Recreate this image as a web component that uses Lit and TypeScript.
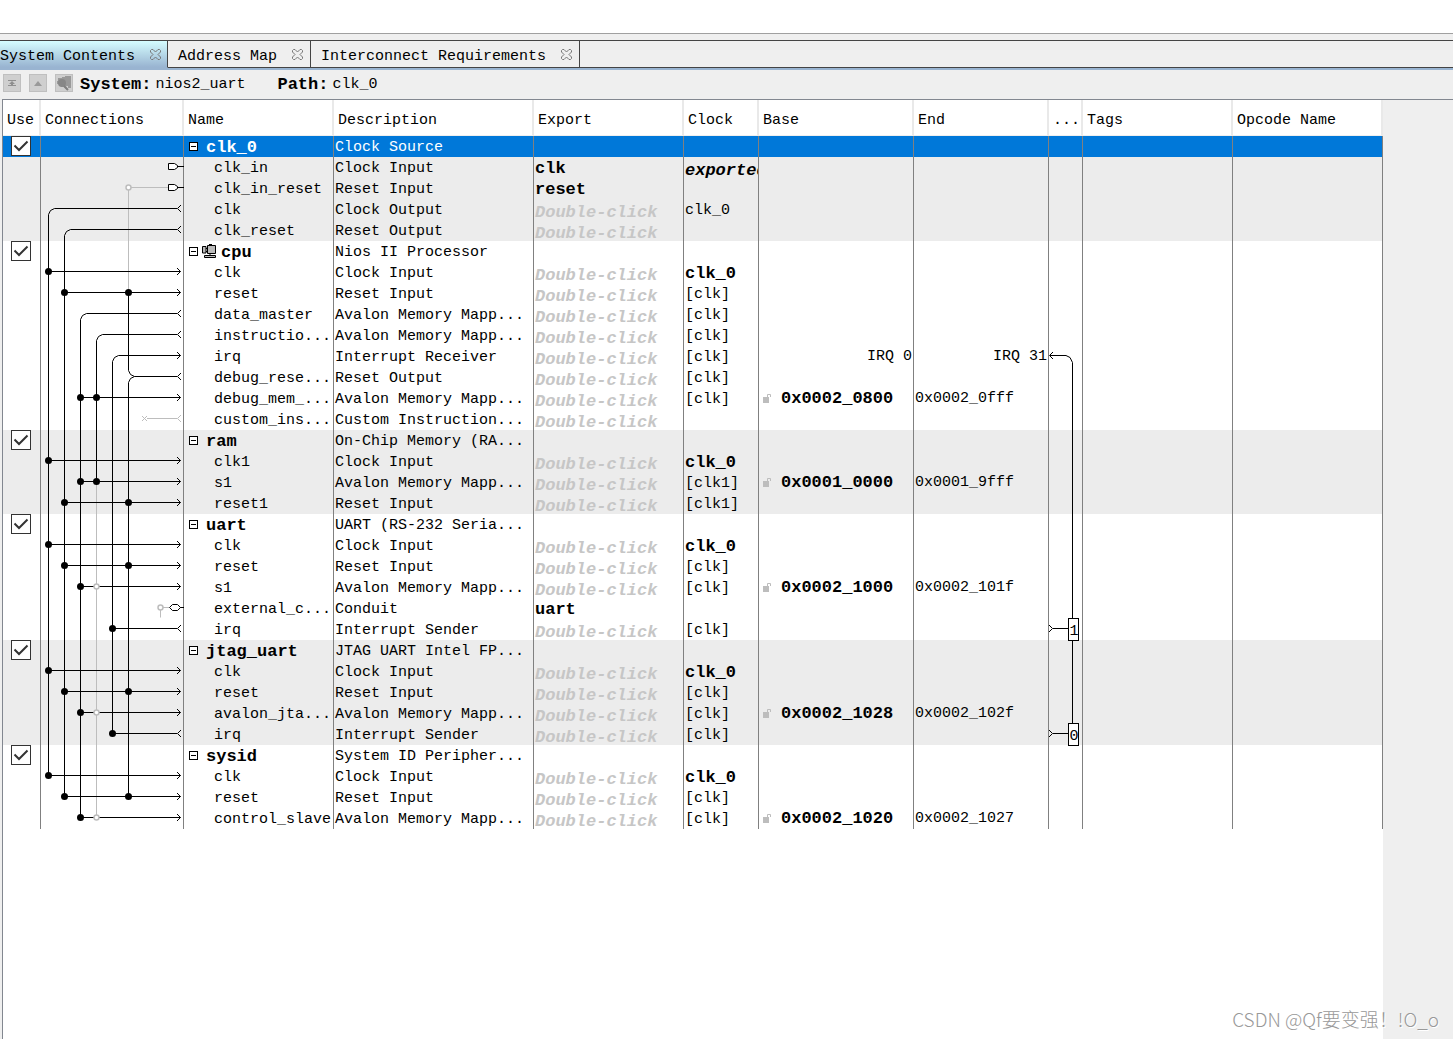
import { LitElement, html, svg, css, nothing } from "lit";
import { customElement, property, state } from "lit/decorators.js";
import { classMap } from "lit/directives/class-map.js";

type PortKind = "in" | "out" | "exported" | "conduit" | "unused";

interface Row {
  name: string;
  desc: string;
  exportAs?: string;
  hint?: boolean;
  clock?: string;
  clockStyle?: "bold" | "italic";
  base?: string;
  end?: string;
  irq?: boolean;
  kind: PortKind;
  from?: number;
  dots?: number[];
  open?: number[];
}

interface Module {
  name: string;
  desc: string;
  icon?: boolean;
  ports: Row[];
}

const MM = "Avalon Memory Mapp...";

const MODULES: Module[] = [
  {
    name: "clk_0",
    desc: "Clock Source",
    ports: [
      { name: "clk_in", desc: "Clock Input", exportAs: "clk", clock: "exported", clockStyle: "italic", kind: "exported" },
      { name: "clk_in_reset", desc: "Reset Input", exportAs: "reset", kind: "exported" },
      { name: "clk", desc: "Clock Output", hint: true, clock: "clk_0", kind: "out", from: 0 },
      { name: "clk_reset", desc: "Reset Output", hint: true, kind: "out", from: 1 },
    ],
  },
  {
    name: "cpu",
    desc: "Nios II Processor",
    icon: true,
    ports: [
      { name: "clk", desc: "Clock Input", hint: true, clock: "clk_0", clockStyle: "bold", kind: "in", dots: [0] },
      { name: "reset", desc: "Reset Input", hint: true, clock: "[clk]", kind: "in", dots: [1, 5] },
      { name: "data_master", desc: MM, hint: true, clock: "[clk]", kind: "out", from: 2 },
      { name: "instructio...", desc: MM, hint: true, clock: "[clk]", kind: "out", from: 3 },
      { name: "irq", desc: "Interrupt Receiver", hint: true, clock: "[clk]", base: "IRQ 0", end: "IRQ 31", irq: true, kind: "in", from: 4 },
      { name: "debug_rese...", desc: "Reset Output", hint: true, clock: "[clk]", kind: "out", from: 5 },
      { name: "debug_mem_...", desc: MM, hint: true, clock: "[clk]", base: "0x0002_0800", end: "0x0002_0fff", kind: "in", dots: [2, 3] },
      { name: "custom_ins...", desc: "Custom Instruction...", hint: true, kind: "unused" },
    ],
  },
  {
    name: "ram",
    desc: "On-Chip Memory (RA...",
    ports: [
      { name: "clk1", desc: "Clock Input", hint: true, clock: "clk_0", clockStyle: "bold", kind: "in", dots: [0] },
      { name: "s1", desc: MM, hint: true, clock: "[clk1]", base: "0x0001_0000", end: "0x0001_9fff", kind: "in", dots: [2, 3] },
      { name: "reset1", desc: "Reset Input", hint: true, clock: "[clk1]", kind: "in", dots: [1, 5] },
    ],
  },
  {
    name: "uart",
    desc: "UART (RS-232 Seria...",
    ports: [
      { name: "clk", desc: "Clock Input", hint: true, clock: "clk_0", clockStyle: "bold", kind: "in", dots: [0] },
      { name: "reset", desc: "Reset Input", hint: true, clock: "[clk]", kind: "in", dots: [1, 5] },
      { name: "s1", desc: MM, hint: true, clock: "[clk]", base: "0x0002_1000", end: "0x0002_101f", kind: "in", dots: [2], open: [3] },
      { name: "external_c...", desc: "Conduit", exportAs: "uart", kind: "conduit" },
      { name: "irq", desc: "Interrupt Sender", hint: true, clock: "[clk]", kind: "out", dots: [4] },
    ],
  },
  {
    name: "jtag_uart",
    desc: "JTAG UART Intel FP...",
    ports: [
      { name: "clk", desc: "Clock Input", hint: true, clock: "clk_0", clockStyle: "bold", kind: "in", dots: [0] },
      { name: "reset", desc: "Reset Input", hint: true, clock: "[clk]", kind: "in", dots: [1, 5] },
      { name: "avalon_jta...", desc: MM, hint: true, clock: "[clk]", base: "0x0002_1028", end: "0x0002_102f", kind: "in", dots: [2], open: [3] },
      { name: "irq", desc: "Interrupt Sender", hint: true, clock: "[clk]", kind: "out", dots: [4] },
    ],
  },
  {
    name: "sysid",
    desc: "System ID Peripher...",
    ports: [
      { name: "clk", desc: "Clock Input", hint: true, clock: "clk_0", clockStyle: "bold", kind: "in", dots: [0] },
      { name: "reset", desc: "Reset Input", hint: true, clock: "[clk]", kind: "in", dots: [1, 5] },
      { name: "control_slave", desc: MM, hint: true, clock: "[clk]", base: "0x0002_1020", end: "0x0002_1027", kind: "in", dots: [2], open: [3] },
    ],
  },
];

const ROWS: (Row | null)[] = MODULES.flatMap((m) => [null, ...m.ports]);
const ROW_H = 21;
const laneX = (lane: number) => 7.5 + lane * 16;
const rowY = (row: number) => row * ROW_H + 9.5;

/** Wiring between module ports, drawn over the Connections column. */
@customElement("wire-diagram")
export class WireDiagram extends LitElement {
  static styles = css`
    :host { display: block; }
    .canvas { display: block; }
    .wire { fill: none; stroke: #000; }
    .faint { fill: none; stroke: #bdbdbd; }
    .dot { fill: #000; }
    .ring { fill: #fff; stroke: #bdbdbd; stroke-width: 1.5; }
    .shape { fill: #fff; stroke: #000; }
  `;

  private vertical(lane: number, a: number, b: number, cls = "wire") {
    return svg`<path class=${cls} d="M${laneX(lane)} ${rowY(a)}V${rowY(b)}" />`;
  }

  private lead(lane: number, a: number, b: number) {
    const x = laneX(lane);
    const y = rowY(a);
    return svg`<path class="wire" d="M136 ${y}H${x + 6}L${x + 2} ${y + 2}L${x} ${y + 6}V${rowY(b)}" />`;
  }

  private port(row: Row, i: number) {
    const y = rowY(i);
    switch (row.kind) {
      case "exported":
        return svg`<path class="wire" d="M136 ${y}H143" />
          <path class="shape" d="M127.500 ${y - 3}H133.500L136.500 ${y - 1}V${y + 1}L133.500 ${y + 3}H127.500Z" />`;
      case "conduit":
        return svg`<path class="faint" d="M119.500 ${y + 10}V${y}H128" />
          <path class="wire" d="M139 ${y}H143" />
          <path class="shape" d="M128.500 ${y}L131.500 ${y - 3}H136.500L139.500 ${y}L136.500 ${y + 3}H131.500Z" />
          <circle class="ring" cx="119.500" cy=${y} r="2.500" />`;
      case "unused":
        return svg`<path class="faint" d="M101 ${y - 2.5}l5 5m0 -5l-5 5M106 ${y}H136M140 ${y - 3.5}L136.500 ${y}L140 ${y + 3.5}" />`;
      case "out":
        return svg`<path class="wire" d="M140 ${y - 3.5}L136.500 ${y}L140 ${y + 3.5}" />`;
      default:
        return svg`<path class="wire" d="M136 ${y}H139.500M136 ${y - 3.5}L139.500 ${y}L136 ${y + 3.5}" />`;
    }
  }

  render() {
    return html`<svg class="canvas" width="143" height=${ROWS.length * ROW_H} aria-hidden="true">
      ${this.vertical(5, 2, 7, "faint")}
      <path class="faint" d="M${laneX(5)} ${rowY(2)}H127" />
      ${this.vertical(3, 16, 32, "faint")}
      ${this.lead(0, 3, 30)} ${this.lead(1, 4, 31)} ${this.lead(2, 8, 32)}
      ${this.lead(3, 9, 16)} ${this.lead(4, 10, 28)} ${this.lead(5, 11, 31)}
      <path class="wire" d="M${laneX(5)} ${rowY(7)}V${rowY(11) - 6}l2 4l4 2" />
      ${ROWS.map((r, i) =>
        r
          ? svg`${r.dots ? svg`<path class="wire" d="M${laneX(r.dots[0])} ${rowY(i)}H136" />` : nothing}
              ${this.port(r, i)}
              ${(r.dots ?? []).map((d) => svg`<circle class="dot" cx=${laneX(d)} cy=${rowY(i)} r="3.500" />`)}
              ${(r.open ?? []).map((d) => svg`<circle class="ring" cx=${laneX(d)} cy=${rowY(i)} r="2.500" />`)}`
          : nothing,
      )}
      <circle class="ring" cx=${laneX(5)} cy=${rowY(2)} r="2.500" />
    </svg>`;
  }
}

/** Interrupt routing with the assigned IRQ numbers. */
@customElement("irq-diagram")
export class IrqDiagram extends LitElement {
  static styles = css`
    :host { display: block; }
    .canvas { display: block; }
    .wire { fill: none; stroke: #000; }
    .box { fill: #fff; stroke: #000; }
    .num { font: 15px "Liberation Mono", monospace; text-anchor: middle; }
  `;

  private sender(row: number, num: number) {
    const y = rowY(row);
    return svg`<path class="wire" d="M0 ${y - 3.5}L3.500 ${y}L0 ${y + 3.5}M4 ${y}H19" />
      <rect class="box" x="19.500" y=${y - 10} width="10" height="22" />
      <text class="num" x="25" y=${y + 6}>${num}</text>`;
  }

  render() {
    const y = rowY(10);
    return html`<svg class="canvas" width="33" height=${ROWS.length * ROW_H} role="img" aria-label="Interrupt numbers">
      <path class="wire" d="M4 ${y - 3.5}L0.500 ${y}L4 ${y + 3.5}M1 ${y}H17L21 ${y + 2}L23.500 ${y + 7}V${rowY(28)}" />
      ${this.sender(23, 1)} ${this.sender(28, 0)}
    </svg>`;
  }
}

@customElement("close-glyph")
export class CloseGlyph extends LitElement {
  static styles = css`
    :host { display: block; }
    .glyph { display: block; fill: none; stroke: #777; }
  `;
  render() {
    return html`<svg class="glyph" width="11" height="11" viewBox="0 0 11 11" aria-hidden="true">
      <path d="M1.500 0.500H3L5.500 3L8 0.500H9.500L10.500 1.500V3L8 5.500L10.500 8V9.500L9.500 10.500H8L5.500 8L3 10.500H1.500L0.500 9.500V8L3 5.500L0.500 3V1.500Z" />
    </svg>`;
  }
}

/** Table of modules and their ports. */
@customElement("module-table")
export class ModuleTable extends LitElement {
  @property() selected = "clk_0";

  static styles = css`
    :host { display: block; position: relative; width: max-content; min-height: 100%; background: #fff; }
    .grid { width: 1380px; table-layout: fixed; border-spacing: 0; }
    .c-use { width: 38px; } .c-conn { width: 143px; } .c-name { width: 150px; }
    .c-desc { width: 200px; } .c-export { width: 150px; } .c-clock { width: 75px; }
    .c-base { width: 155px; } .c-end { width: 135px; } .c-irq { width: 34px; }
    .c-tags { width: 150px; } .c-op { width: 150px; }
    th, td { box-sizing: border-box; padding: 0; text-align: left; white-space: nowrap; }
    th { height: 36px; padding: 5px 0 0 4px; font-weight: normal; border-right: 2px solid #e9e9e9; border-bottom: 1px solid #efefef; }
    td { height: 21px; line-height: 19px; padding: 2px 0 0 1px; vertical-align: top; border-right: 1px solid #808080; }
    .clip { overflow: hidden; }
    .up { padding-top: 0; }
    .shade { background: #ececec; }
    .sel { background: #0078d9; color: #fff; }
    .strong { font-size: 17px; font-weight: bold; }
    .slant { font-size: 17px; font-weight: bold; font-style: italic; }
    .line { display: flex; align-items: center; height: 19px; }
    .up .line { height: 21px; }
    .low { padding-top: 4px; height: 15px; line-height: 15px; }
    .hint { color: #c6c6c6; }
    .mod { padding-left: 4px; gap: 8px; }
    .mod.icon { gap: 4px; }
    .child { padding-left: 29px; }
    .right { justify-content: flex-end; padding-right: 1px; }
    .toggle { box-sizing: border-box; width: 9px; height: 9px; margin-bottom: 2px; padding: 0; border: 1px solid #000; border-radius: 0; background: linear-gradient(#000, #000) center / 5px 1px no-repeat #fff; flex: none; }
    .cpu { flex: none; margin-bottom: 3px; }
    .tick { display: grid; width: 20px; height: 20px; margin-left: 7px; }
    .box { grid-area: 1 / 1; appearance: none; margin: 0; width: 20px; height: 20px; border: 1px solid #333; background: #fff; }
    .mark { grid-area: 1 / 1; fill: none; stroke: #333; stroke-width: 2; pointer-events: none; visibility: hidden; }
    .box:checked + .mark { visibility: visible; }
    .addr { gap: 10px; padding-left: 2px; }
    .lock { flex: none; }
    .wires { position: absolute; top: 36px; left: 38px; pointer-events: none; }
    .irqs { position: absolute; top: 36px; left: 1046px; pointer-events: none; }
  `;

  private moduleRow(m: Module, shade: boolean) {
    const sel = m.name === this.selected;
    return html`<tr class=${classMap({ sel, shade: shade && !sel })}>
      <td class="up"><label class="tick">
        <input class="box" type="checkbox" checked aria-label="Use ${m.name}" />
        <svg class="mark" width="20" height="20" viewBox="0 0 20 20"><path d="M3.500 9.500L8 14L16.500 5.500" /></svg>
      </label></td>
      <td></td>
      <td><div class=${classMap({ line: true, mod: true, icon: !!m.icon })}>
        <button class="toggle" aria-label="Collapse ${m.name}"></button>
        ${m.icon
          ? html`<svg class="cpu" width="15" height="14" viewBox="0 0 15 14" aria-hidden="true">
              <path d="M0.500 2.500H4V9H0.500ZM2.500 11.500H13.500V13.500H2.500Z" fill="#bbb" stroke="#000" />
              <path d="M5.500 1.500H13.500V9.500H5.500ZM7 0.500H10M8 10V11M4 4.500H5M4 7.500H5" fill="#bbb" stroke="#000" />
            </svg>`
          : nothing}
        <span class="strong">${m.name}</span>
      </div></td>
      <td>${m.desc}</td>
      <td></td><td></td><td></td><td></td><td></td><td></td><td></td>
    </tr>`;
  }

  private portRow(r: Row, shade: boolean) {
    return html`<tr class=${classMap({ shade })}>
      <td></td>
      <td></td>
      <td><div class="line child">${r.name}</div></td>
      <td>${r.desc}</td>
      <td>${r.hint
        ? html`<div class="line low slant hint">Double-click</div>`
        : html`<div class="line strong">${r.exportAs}</div>`}</td>
      <td class="clip"><div class=${classMap({
        line: true,
        strong: r.clockStyle === "bold",
        slant: r.clockStyle === "italic",
        low: r.clockStyle === "italic",
      })}>${r.clock}</div></td>
      <td class="up">${r.irq
        ? html`<div class="line right">${r.base}</div>`
        : r.base
          ? html`<div class="line addr">
              <svg class="lock" width="9" height="11" viewBox="0 0 9 11" aria-hidden="true">
                <path d="M1 4H7V10H1Z" fill="#bdbdbd" />
                <path d="M5.500 4V1.500H8.500V4" fill="none" stroke="#bdbdbd" />
              </svg><span class="strong">${r.base}</span></div>`
          : nothing}</td>
      <td class="up"><div class=${classMap({ line: true, right: !!r.irq })}>${r.end}</div></td>
      <td></td><td></td><td></td>
    </tr>`;
  }

  render() {
    return html`
      <table class="grid">
        <colgroup>
          <col class="c-use" /><col class="c-conn" /><col class="c-name" /><col class="c-desc" />
          <col class="c-export" /><col class="c-clock" /><col class="c-base" /><col class="c-end" />
          <col class="c-irq" /><col class="c-tags" /><col class="c-op" />
        </colgroup>
        <thead>
          <tr>${["Use", "Connections", "Name", "Description", "Export", "Clock", "Base", "End", "...", "Tags", "Opcode Name"].map(
            (h) => html`<th scope="col">${h}</th>`,
          )}</tr>
        </thead>
        <tbody>
          ${MODULES.map((m, i) => [
            this.moduleRow(m, i % 2 === 0),
            m.ports.map((p) => this.portRow(p, i % 2 === 0)),
          ])}
        </tbody>
      </table>
      <wire-diagram class="wires"></wire-diagram>
      <irq-diagram class="irqs"></irq-diagram>
    `;
  }
}

@customElement("app-root")
export class AppRoot extends LitElement {
  @state() private active = 0;

  static styles = css`
    :host {
      display: flex; flex-direction: column; position: relative; min-height: 100vh; overflow: hidden;
      background: #efefef; color: #000; font: 15px "Liberation Mono", "Noto Sans CJK SC", monospace;
    }
    button { font: inherit; color: inherit; }
    .top { height: 33px; background: #fff; border-bottom: 1px solid #a0a0a0; }
    .tabs { display: flex; margin-top: 6px; height: 27px; border-top: 1px solid #444; border-bottom: 2px solid #99b4d1; }
    .tab { display: flex; align-items: center; gap: 15px; padding: 0 7px 0 10px; border-right: 1px solid #444; border-bottom: 1px solid #444; }
    .tab:first-child { padding-left: 0; padding-right: 6px; }
    .tab.on { background: linear-gradient(#d5fdff, #99b4d1); border-bottom-color: #99b4d1; }
    .rest { flex: 1; border-bottom: 1px solid #444; }
    .pick, .close { border: 0; padding: 0; background: none; white-space: nowrap; }
    .pick { padding-top: 4px; }
    .bar { display: flex; align-items: center; height: 29px; padding: 0 3px; }
    .tools { display: flex; gap: 8px; margin-right: 7px; padding-bottom: 3px; }
    .tool { display: block; width: 18px; height: 18px; padding: 0; border: 1px solid #bfbfbf; background: #cfcfcf; }
    .tool svg { display: block; }
    .key { font-size: 17px; font-weight: bold; margin-right: 4px; }
    .val { margin-right: 32px; }
    .pane { flex: 1; margin-left: 2px; border-left: 1px solid #828790; border-top: 1px solid #828790; display: flex; }
    .mark { position: absolute; right: 14px; bottom: 6px; font: 300 19px/28px "Noto Sans CJK SC", sans-serif; color: #999; text-shadow: 1px 1px 0 #fff; }
  `;

  render() {
    const tabs = ["System Contents", "Address Map", "Interconnect Requirements"];
    return html`
      <div class="top"></div>
      <nav class="tabs">
        ${tabs.map(
          (t, i) => html`<div class=${classMap({ tab: true, on: i === this.active })}>
            <button class="pick" @click=${() => (this.active = i)}>${t}</button>
            <button class="close" aria-label="Close ${t}"><close-glyph></close-glyph></button>
          </div>`,
        )}
        <div class="rest"></div>
      </nav>
      <div class="bar">
        <div class="tools">
          <button class="tool" aria-label="Go to top"><svg width="16" height="16" viewBox="0 0 16 16"><path d="M4 5H12V6H4ZM8 6L11 9H9V10H12V11H4V10H7V9H5Z" fill="#8f8f8f" /></svg></button>
          <button class="tool" aria-label="Go up"><svg width="16" height="16" viewBox="0 0 16 16"><path d="M4 11L8 6L12 11Z" fill="#999" /></svg></button>
          <button class="tool" aria-label="Drill into module"><svg width="16" height="16" viewBox="0 0 16 16"><path d="M2 3H6V2H9V1H15V13H12V11H10L12 15H11L8 12H5V11H3V9H1V6H2Z" fill="#999" /><circle cx="6" cy="8" r="4" fill="#878787" /><path d="M8 11L12 15" stroke="#808080" stroke-width="2" /></svg></button>
        </div>
        <span class="key">System:</span><span class="val">nios2_uart</span>
        <span class="key">Path:</span><span class="val">clk_0</span>
      </div>
      <main class="pane"><module-table></module-table></main>
      <div class="mark">CSDN @Qf要变强！!O_o</div>
    `;
  }
}
